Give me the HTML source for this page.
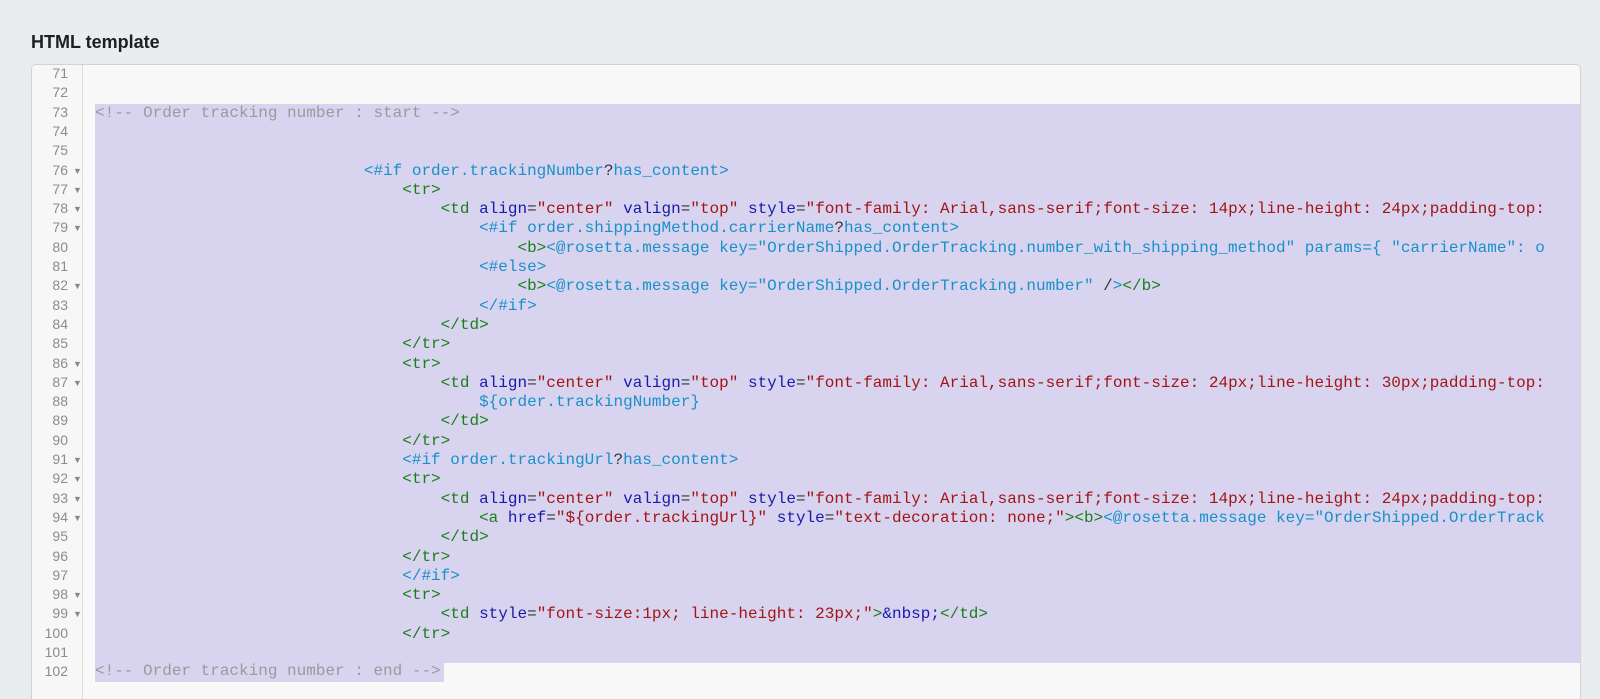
<!DOCTYPE html>
<html style="overflow:hidden;height:699px"><head><meta charset="utf-8"><style>
body{margin:0;background:#e9edf0;width:1600px;height:699px;overflow:hidden;position:relative;font-family:"Liberation Sans",sans-serif}
h1{position:absolute;left:31px;top:32px;margin:0;font-size:18px;font-weight:bold;color:#1d1f22}
.box{position:absolute;left:31px;top:64px;width:1548px;height:645px;border:1px solid #cfd3d8;border-radius:5px;background:#f9f9f9;overflow:hidden}
.gut{position:absolute;left:0;top:0;width:50px;height:100%;border-right:1px solid #dcdcdc;background:#f7f7f7}
.ln{position:absolute;left:0;height:19.3px;line-height:19.3px;font:14px "Liberation Sans",sans-serif;color:#8c8c8c;width:36px;text-align:right}
.ar{position:absolute;left:41px;font-size:9px;color:#888;line-height:19.3px}
.l{position:absolute;left:63px;height:19.3px;line-height:19.3px;font:16px "Liberation Mono",monospace;white-space:pre;color:#333}
.sel{position:absolute;left:63px;right:0;top:38.6px;height:559.7px;background:#d8d4f0}
.sel2{position:absolute;left:63px;width:349px;top:597.3px;height:19.3px;background:#d8d4f0}
.c{color:#9a9a9a}.t{color:#1a7f1a}.a{color:#1a1aaa}.s{color:#a31515}.f{color:#1a90c8}.k{color:#333}
</style></head><body>
<h1>HTML template</h1>
<div class="box">
<div class="gut"></div>
<div class="sel"></div><div class="sel2"></div>
<div id="g"></div>
<div class="l" style="top:38.6px"><span class="c">&lt;!-- Order tracking number : start --&gt;</span></div>
<div class="l" style="top:96.5px">                            <span class="f">&lt;#if order.trackingNumber</span>?<span class="f">has_content&gt;</span></div>
<div class="l" style="top:115.8px">                                <span class="t">&lt;tr&gt;</span></div>
<div class="l" style="top:135.1px">                                    <span class="t">&lt;td</span> <span class="a">align</span>=<span class="s">"center"</span> <span class="a">valign</span>=<span class="s">"top"</span> <span class="a">style</span>=<span class="s">"font-family: Arial,sans-serif;font-size: 14px;line-height: 24px;padding-top:</span></div>
<div class="l" style="top:154.4px">                                        <span class="f">&lt;#if order.shippingMethod.carrierName</span>?<span class="f">has_content&gt;</span></div>
<div class="l" style="top:173.7px">                                            <span class="t">&lt;b&gt;</span><span class="f">&lt;@rosetta.message key="OrderShipped.OrderTracking.number_with_shipping_method" params={ "carrierName": o</span></div>
<div class="l" style="top:193px">                                        <span class="f">&lt;#else&gt;</span></div>
<div class="l" style="top:212.3px">                                            <span class="t">&lt;b&gt;</span><span class="f">&lt;@rosetta.message key="OrderShipped.OrderTracking.number"</span> /<span class="f">&gt;</span><span class="t">&lt;/b&gt;</span></div>
<div class="l" style="top:231.6px">                                        <span class="f">&lt;/#if&gt;</span></div>
<div class="l" style="top:250.9px">                                    <span class="t">&lt;/td&gt;</span></div>
<div class="l" style="top:270.2px">                                <span class="t">&lt;/tr&gt;</span></div>
<div class="l" style="top:289.5px">                                <span class="t">&lt;tr&gt;</span></div>
<div class="l" style="top:308.8px">                                    <span class="t">&lt;td</span> <span class="a">align</span>=<span class="s">"center"</span> <span class="a">valign</span>=<span class="s">"top"</span> <span class="a">style</span>=<span class="s">"font-family: Arial,sans-serif;font-size: 24px;line-height: 30px;padding-top:</span></div>
<div class="l" style="top:328.1px">                                        <span class="f">${order.trackingNumber}</span></div>
<div class="l" style="top:347.4px">                                    <span class="t">&lt;/td&gt;</span></div>
<div class="l" style="top:366.7px">                                <span class="t">&lt;/tr&gt;</span></div>
<div class="l" style="top:386px">                                <span class="f">&lt;#if order.trackingUrl</span>?<span class="f">has_content&gt;</span></div>
<div class="l" style="top:405.3px">                                <span class="t">&lt;tr&gt;</span></div>
<div class="l" style="top:424.6px">                                    <span class="t">&lt;td</span> <span class="a">align</span>=<span class="s">"center"</span> <span class="a">valign</span>=<span class="s">"top"</span> <span class="a">style</span>=<span class="s">"font-family: Arial,sans-serif;font-size: 14px;line-height: 24px;padding-top:</span></div>
<div class="l" style="top:443.9px">                                        <span class="t">&lt;a</span> <span class="a">href</span>=<span class="s">"${order.trackingUrl}"</span> <span class="a">style</span>=<span class="s">"text-decoration: none;"</span><span class="t">&gt;&lt;b&gt;</span><span class="f">&lt;@rosetta.message key="OrderShipped.OrderTrack</span></div>
<div class="l" style="top:463.2px">                                    <span class="t">&lt;/td&gt;</span></div>
<div class="l" style="top:482.5px">                                <span class="t">&lt;/tr&gt;</span></div>
<div class="l" style="top:501.8px">                                <span class="f">&lt;/#if&gt;</span></div>
<div class="l" style="top:521.1px">                                <span class="t">&lt;tr&gt;</span></div>
<div class="l" style="top:540.4px">                                    <span class="t">&lt;td</span> <span class="a">style</span>=<span class="s">"font-size:1px; line-height: 23px;"</span><span class="t">&gt;</span><span class="a">&amp;nbsp;</span><span class="t">&lt;/td&gt;</span></div>
<div class="l" style="top:559.7px">                                <span class="t">&lt;/tr&gt;</span></div>
<div class="l" style="top:597.3px"><span class="c">&lt;!-- Order tracking number : end --&gt;</span></div>
</div>
<script>
var g=document.getElementById('g'),arr=[76,77,78,79,82,86,87,91,92,93,94,98,99],h='';
for(var i=71;i<=102;i++){var t=((i-71)*19.3).toFixed(1);h+='<div class="ln" style="top:'+t+'px">'+i+'</div>';if(arr.indexOf(i)>=0)h+='<div class="ar" style="position:absolute;top:'+t+'px">&#9660;</div>';}
g.innerHTML=h;
</script>
</body></html>
